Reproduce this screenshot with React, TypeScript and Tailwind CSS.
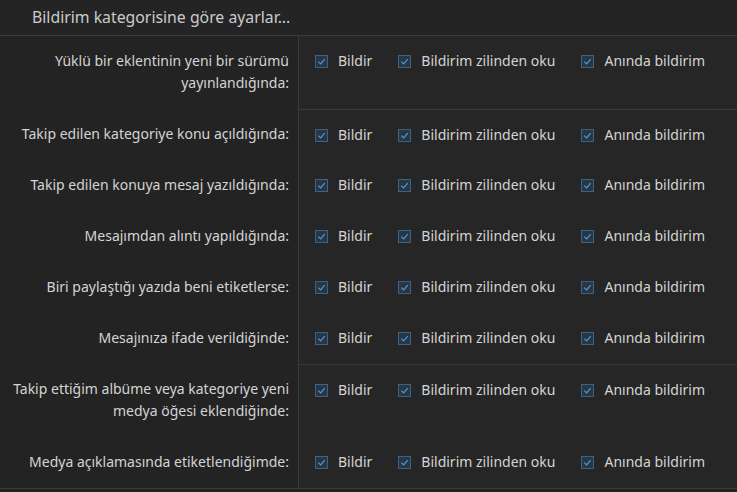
import React from "react";

const rows = [
  { label: "Yüklü bir eklentinin yeni bir sürümü yayınlandığında:", sep: false },
  { label: "Takip edilen kategoriye konu açıldığında:", sep: true },
  { label: "Takip edilen konuya mesaj yazıldığında:", sep: false },
  { label: "Mesajımdan alıntı yapıldığında:", sep: false },
  { label: "Biri paylaştığı yazıda beni etiketlerse:", sep: false },
  { label: "Mesajınıza ifade verildiğinde:", sep: false },
  { label: "Takip ettiğim albüme veya kategoriye yeni medya öğesi eklendiğinde:", sep: true },
  { label: "Medya açıklamasında etiketlendiğimde:", sep: false },
];

const options = ["Bildir", "Bildirim zilinden oku", "Anında bildirim"];

function Check() {
  return (
    <span className="w-[13px] h-[13px] shrink-0 border border-[#3f6282] bg-[#253848] flex items-center justify-center">
      <svg width="9" height="9" viewBox="0 0 10 10" fill="none">
        <path d="M1.5 5.2 L4 7.6 L8.6 2.4" stroke="#5e97ca" strokeWidth="1.3" />
      </svg>
    </span>
  );
}

export default function App() {
  return (
    <div className="w-[737px] h-[492px] bg-[#242424] text-[#d4d4d4] overflow-hidden" style={{ fontFamily: '"Noto Sans", sans-serif' }}>
      <div className="h-[36px] pl-[32px] flex items-center border-b border-[#3a3a3a] text-[15.8px] text-[#cbcbcb]">
        Bildirim kategorisine göre ayarlar...
      </div>
      <div className="grid grid-cols-[299px_1fr] border-b border-[#3a3a3a]">
        {rows.map((row, i) => (
          <React.Fragment key={i}>
            <div className="bg-[#232323] border-r border-[#3a3a3a] pl-2 pr-[9px] pt-[14px] pb-[15px] text-right text-[14px] leading-[22px]">
              {row.label}
            </div>
            <div className={`bg-[#262626] pl-[16px] pt-[14px] flex items-start gap-[26px] text-[14px] leading-[22px] ${row.sep ? "border-t border-[#3a3a3a]" : ""}`}>
              {options.map((o) => (
                <div key={o} className="flex items-center gap-[10px]">
                  <Check />
                  <span>{o}</span>
                </div>
              ))}
            </div>
          </React.Fragment>
        ))}
      </div>
    </div>
  );
}
